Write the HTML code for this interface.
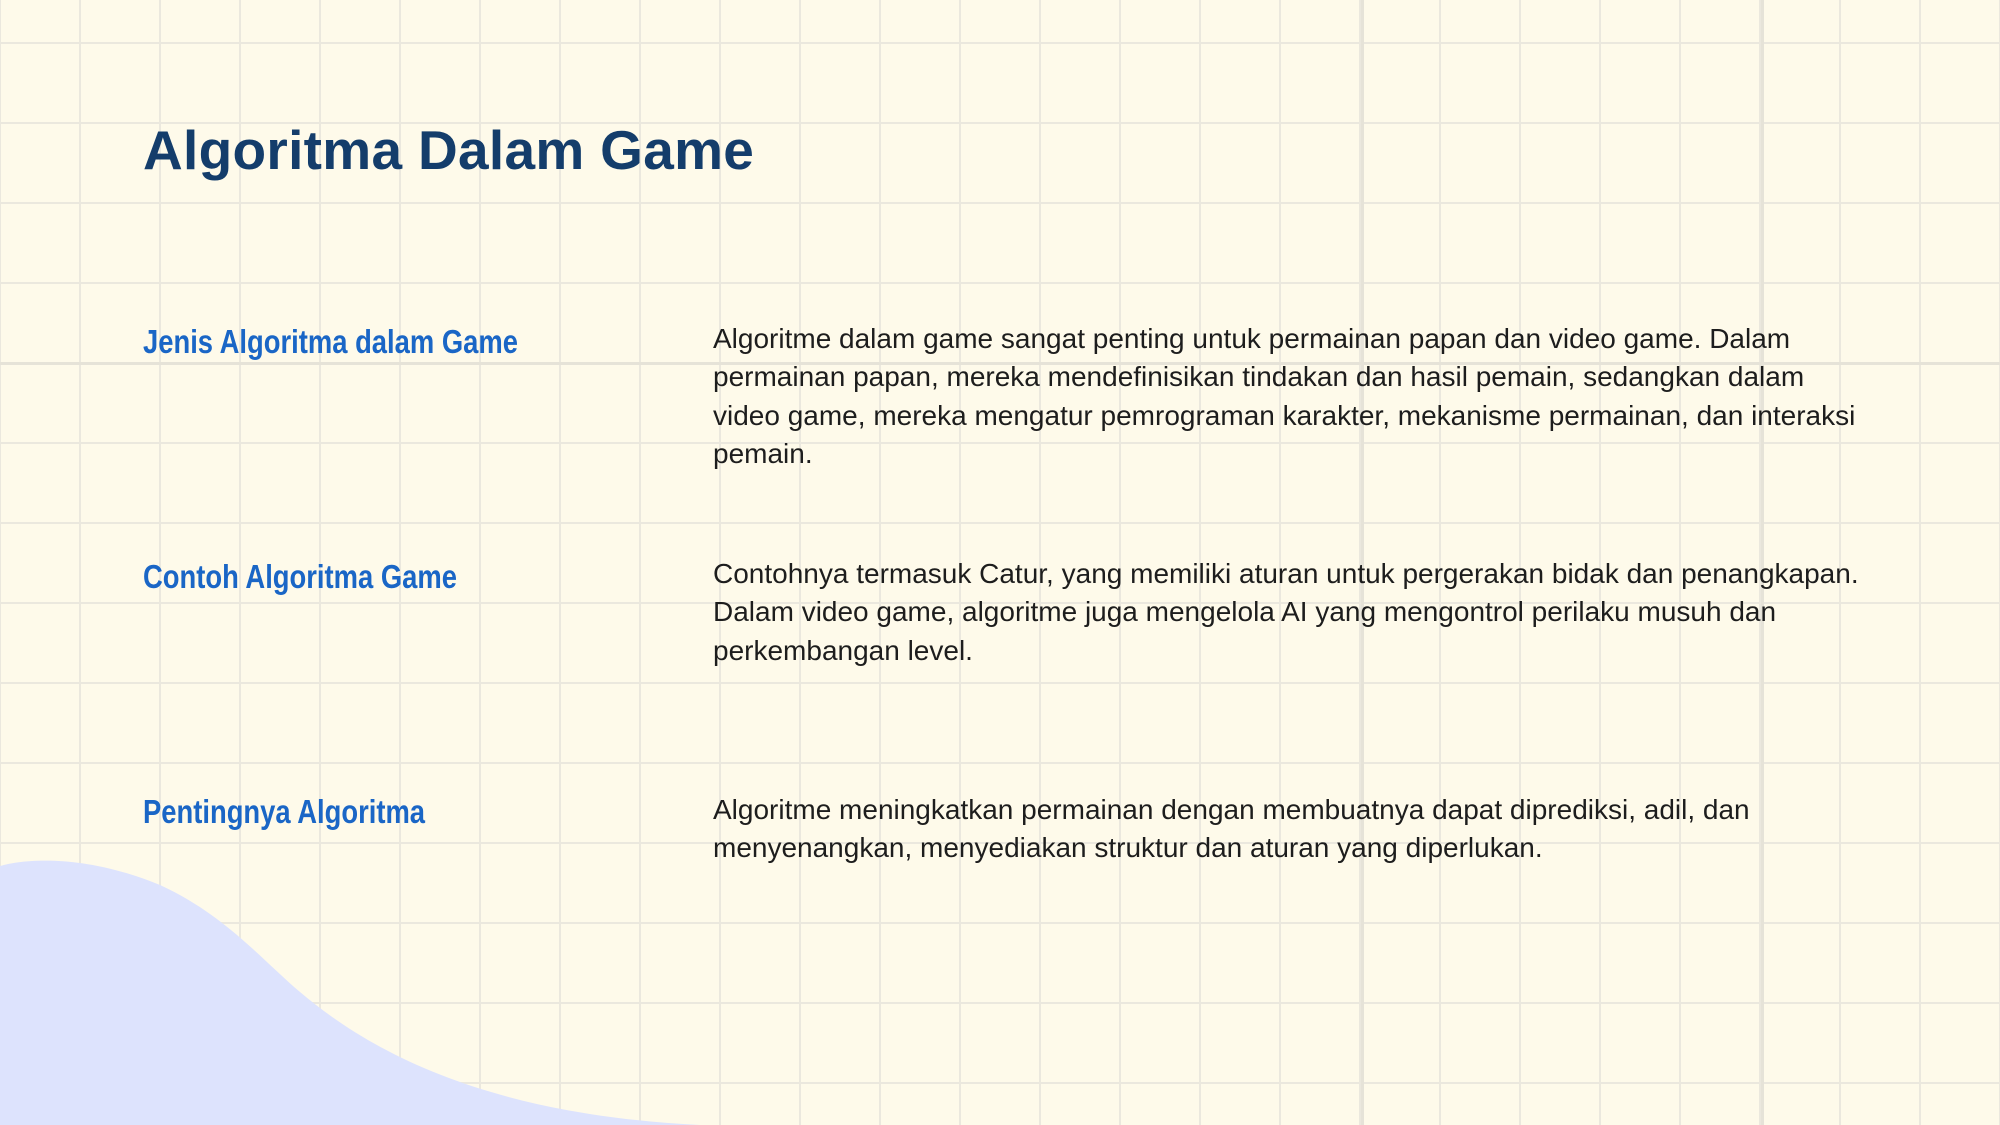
<!DOCTYPE html>
<html><head><meta charset="utf-8"><style>
html,body{margin:0;padding:0}
body{width:2000px;height:1125px;position:relative;overflow:hidden;background-color:#fefaea;
background-image:linear-gradient(to right,#ebe8de 2px,transparent 2px),linear-gradient(to bottom,#ebe8de 2px,transparent 2px);
background-size:80px 80px;background-position:-1px 42px;}
.thv{position:absolute;top:0;width:3px;height:1125px;background:#e6e3d8}
.thh{position:absolute;left:0;height:3px;width:2000px;background:#e6e3d8}
h1{position:absolute;left:143px;top:112px;margin:0;font:bold 55px/76px "Liberation Sans",sans-serif;color:#143d6b;letter-spacing:0.3px}
.h{position:absolute;left:143px;margin:0;font:bold 33px/44px "Liberation Sans",sans-serif;color:#1a66c6;transform:scaleX(0.83);transform-origin:left}
.p{position:absolute;left:713px;margin:0;font:28px/38.3px "Liberation Sans",sans-serif;color:#1d1d1d;white-space:nowrap}
svg{position:absolute;left:0;top:0}
</style></head><body>
<div class="thv" style="left:1361px"></div>
<div class="thv" style="left:1761px"></div>
<div class="thh" style="top:362px"></div>
<svg width="2000" height="1125"><path d="M0,866 C20,860 80,852 160,885 C225,915 260,958 300,992 C380,1060 500,1115 700,1125 L0,1125 Z" fill="#dde3fd"/></svg>
<h1>Algoritma Dalam Game</h1>
<div class="h" style="top:320px">Jenis Algoritma dalam Game</div>
<div class="h" style="top:555px">Contoh Algoritma Game</div>
<div class="h" style="top:790px">Pentingnya Algoritma</div>
<div class="p" style="top:320px">Algoritme dalam game sangat penting untuk permainan papan dan video game. Dalam<br>permainan papan, mereka mendefinisikan tindakan dan hasil pemain, sedangkan dalam<br>video game, mereka mengatur pemrograman karakter, mekanisme permainan, dan interaksi<br>pemain.</div>
<div class="p" style="top:555px">Contohnya termasuk Catur, yang memiliki aturan untuk pergerakan bidak dan penangkapan.<br>Dalam video game, algoritme juga mengelola AI yang mengontrol perilaku musuh dan<br>perkembangan level.</div>
<div class="p" style="top:791px">Algoritme meningkatkan permainan dengan membuatnya dapat diprediksi, adil, dan<br>menyenangkan, menyediakan struktur dan aturan yang diperlukan.</div>
</body></html>
